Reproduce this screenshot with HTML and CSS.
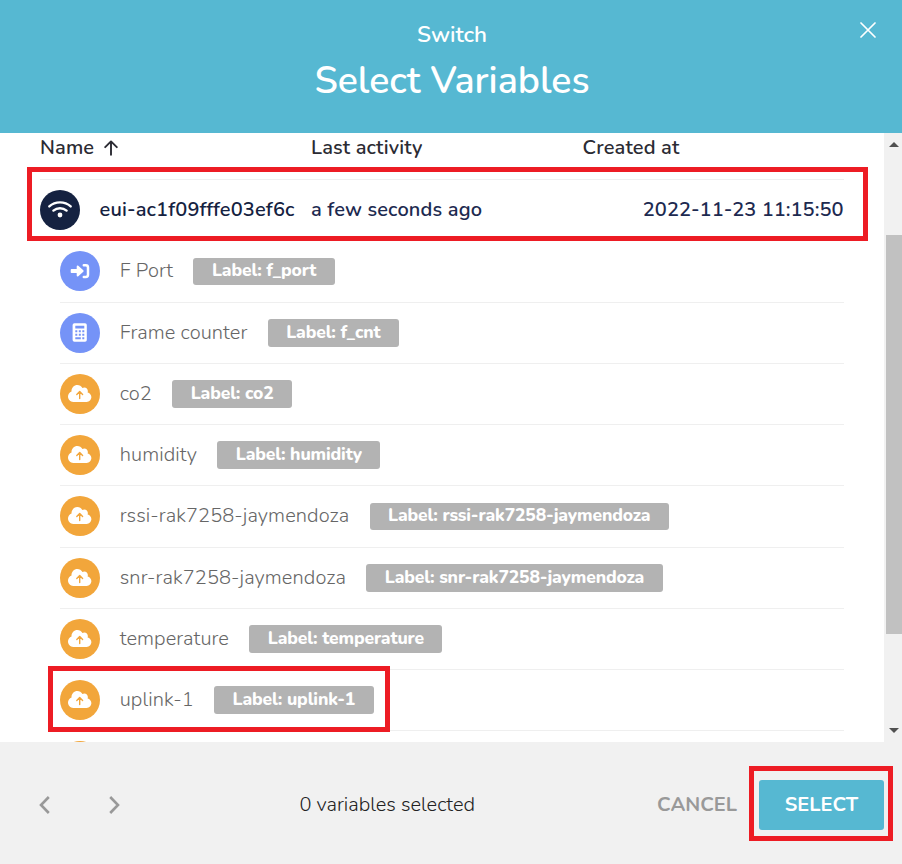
FILE: index.html
```
<!DOCTYPE html>
<html lang="en">
<head>
<meta charset="utf-8">
<title>Select Variables</title>
<link rel="stylesheet" href="styles.css">
</head>
<body>
<svg class="defs" aria-hidden="true">
  <symbol id="cloud" viewBox="0 0 40 40">
    <path transform="translate(8 9.9) scale(.0365 .0375)" fill="#fff" d="M537.6 226.6c4.1-10.7 6.4-22.4 6.4-34.6 0-53-43-96-96-96-19.7 0-38.1 6-53.3 16.2C367 64.2 315.3 32 256 32c-88.4 0-160 71.6-160 160 0 2.7.1 5.4.2 8.1C40.2 219.8 0 273.2 0 336c0 79.5 64.5 144 144 144h368c70.7 0 128-57.3 128-128 0-61.9-44-113.6-102.4-125.4z"/>
    <path d="M19.7 24.6V17.8M16.8 20.5l2.9-2.9 2.9 2.9" fill="none" stroke="#f2a63b" stroke-width="1.4" stroke-linecap="round" stroke-linejoin="round"/>
  </symbol>
</svg>
<div class="dialog">
  <header class="header">
    <div class="subtitle">Switch</div>
    <h1 class="title">Select Variables</h1>
    <button class="close" aria-label="Close"><svg width="16" height="16" viewBox="0 0 16 16"><path d="M1 1l14 14M15 1L1 15" stroke="#fff" stroke-width="1.7" stroke-linecap="round"/></svg></button>
  </header>
  <main class="body">
    <div class="list">
      <div class="columns">
        <div class="col-name">Name <svg class="sort" width="14" height="16" viewBox="0 0 14 16"><path d="M7 14.8V1.6M1.2 7.2L7 1.4l5.8 5.8" fill="none" stroke="#2b2b33" stroke-width="1.9" stroke-linecap="round" stroke-linejoin="round"/></svg></div>
        <div>Last activity</div>
        <div>Created at</div>
      </div>
      <div class="device">
        <div class="device-name"><span class="dot navy"><svg viewBox="0 0 40 40"><path d="M9.3 16.4c6-5.4 15.4-5.4 21.4 0M13.4 20.6c3.8-3.2 9.4-3.2 13.2 0" fill="none" stroke="#fff" stroke-width="2.4" stroke-linecap="round"/><circle cx="20" cy="25" r="2.4" fill="#fff"/></svg></span><span>eui-ac1f09fffe03ef6c</span></div>
        <div>a few seconds ago</div>
        <div class="date">2022-11-23 11:15:50</div>
      </div>
      <div class="rows">
        <div class="row tall first"><span class="dot blue"><svg viewBox="0 0 40 40"><path d="M11.5 18.1h5.2v-2.6c0-1 .9-1.3 1.6-.7l5 4.5c.5.5.5 1 0 1.5l-5 4.5c-.7.6-1.6.3-1.6-.7V22h-5.2c-.5 0-.8-.3-.8-.8v-2.3c0-.5.3-.8.8-.8z" fill="#fff"/><path d="M23.8 14.2h2a2.2 2.2 0 0 1 2.2 2.2v7.4a2.2 2.2 0 0 1-2.2 2.2h-2" fill="none" stroke="#fff" stroke-width="2.5" stroke-linecap="round"/></svg></span><span class="name">F Port</span><span class="badge">Label: f_port</span></div>
        <div class="row"><span class="dot blue"><svg viewBox="0 0 40 40"><rect x="12.6" y="10.3" width="14.2" height="18.5" rx="1.8" fill="#fff"/><path d="M15.3 12.8h9v2.8h-9zM15.3 17.3h2v2h-2zM18.8 17.3h2v2h-2zM22.3 17.3h2v2h-2zM15.3 20.8h2v2h-2zM18.8 20.8h2v2h-2zM22.3 20.8h2v2h-2zM15.3 24.3h5.5v2h-5.5zM22.3 24.3h2v2h-2z" fill="#7593f7"/></svg></span><span class="name">Frame counter</span><span class="badge">Label: f_cnt</span></div>
        <div class="row"><span class="dot orange"><svg><use href="#cloud"/></svg></span><span class="name">co2</span><span class="badge">Label: co2</span></div>
        <div class="row"><span class="dot orange"><svg><use href="#cloud"/></svg></span><span class="name">humidity</span><span class="badge">Label: humidity</span></div>
        <div class="row tall"><span class="dot orange"><svg><use href="#cloud"/></svg></span><span class="name">rssi-rak7258-jaymendoza</span><span class="badge">Label: rssi-rak7258-jaymendoza</span></div>
        <div class="row"><span class="dot orange"><svg><use href="#cloud"/></svg></span><span class="name">snr-rak7258-jaymendoza</span><span class="badge">Label: snr-rak7258-jaymendoza</span></div>
        <div class="row"><span class="dot orange"><svg><use href="#cloud"/></svg></span><span class="name">temperature</span><span class="badge">Label: temperature</span></div>
        <div class="row"><span class="dot orange"><svg><use href="#cloud"/></svg></span><span class="name">uplink-1</span><span class="badge">Label: uplink-1</span></div>
        <div class="row"><span class="dot orange"></span></div>
      </div>
    </div>
    <div class="scrollbar"><span class="arrow up"></span><span class="thumb"></span><span class="arrow down"></span></div>
  </main>
  <footer class="footer">
    <div class="pager">
      <svg width="12" height="18" viewBox="0 0 12 18"><path d="M9.8 1L2 9l7.8 8"/></svg>
      <svg width="12" height="18" viewBox="0 0 12 18"><path d="M2.2 1L10 9l-7.8 8"/></svg>
    </div>
    <div class="count">0 variables selected</div>
    <div class="actions"><button class="cancel">CANCEL</button><button class="select">SELECT</button></div>
  </footer>
  <div class="mark mark-device"></div>
  <div class="mark mark-variable"></div>
  <div class="mark mark-select"></div>
</div>
</body>
</html>
```
FILE: styles.css
```
* { box-sizing: border-box; }
body { margin: 0; font: 400 20px/28px Nunito, "Nunito Sans", Lato, sans-serif; }
button { font: inherit; border: 0; background: none; padding: 0; }
.defs { position: absolute; width: 0; height: 0; }
.dialog { position: relative; width: 902px; height: 864px; display: flex; flex-direction: column; overflow: hidden; background: #fff; }

.header { height: 133px; background: #56b8d2; color: #fff; text-align: center; padding-top: 19px; }
.subtitle { font-size: 22.5px; line-height: 32px; font-weight: 600; padding-left: 2px; }
.title { margin: 5px 0 0; font-size: 37.5px; line-height: 50px; font-weight: 600; padding-left: 2px; }
.close { position: absolute; right: 26px; top: 22px; width: 16px; height: 16px; }
.close svg { display: block; }

.body { height: 609px; display: flex; overflow: hidden; }
.list { width: 884px; padding: 0 40px; }
.columns, .device { display: grid; grid-template-columns: 271px 271.5px 1fr; font-weight: 650; letter-spacing: .15px; white-space: nowrap; }
.columns { height: 46px; padding-top: 1px; color: #2b2b33; }
.col-name { display: flex; align-items: center; gap: 9.5px; height: 28px; }
.device { height: 61px; border-top: 1px solid #efefef; color: #1d2a50; line-height: 59px; }
.device-name { display: flex; gap: 19.5px; color: #152241; }
.device-name .dot { margin-top: 10px; }
.date { text-align: right; letter-spacing: .04px; padding-right: .5px; }

.dot { flex: none; width: 40px; height: 40px; border-radius: 50%; }
.dot svg { display: block; width: 40px; height: 40px; }
.navy { background: #152241; }
.blue { background: #7593f7; }
.orange { background: #f2a63b; }

.rows { padding-left: 20px; }
.row { height: 61px; border-top: 1px solid #efefef; display: flex; align-items: flex-start; padding-top: 10px; }
.tall { height: 62px; }
.first { border-top-color: transparent; }
.name { margin: 6px 20.3px 0 19.7px; color: #666; font-weight: 360; letter-spacing: .09px; }
.badge { height: 28px; margin-top: 6px; padding: 0 18.5px; border-radius: 3px; background: #b3b3b3; color: #fff; font-size: 17.5px; line-height: 26px; font-weight: 800; letter-spacing: -.14px; }
.tall .badge { margin-top: 7px; height: 27px; line-height: 25px; }

.scrollbar { width: 18px; background: #f1f1f1; display: flex; flex-direction: column; align-items: center; padding: 9px 0 9px 2px; }
.arrow { border: 5px solid transparent; }
.up { border-top: 0; border-bottom-color: #505050; }
.down { margin-top: auto; border-bottom: 0; border-top-color: #505050; }
.thumb { width: 16px; height: 399px; margin-top: 88px; background: #c1c1c1; }

.footer { height: 122px; background: #f1f1f1; display: grid; grid-template-columns: 260.5px 1fr auto; align-items: center; padding: 4px 18px 0 39px; }
.pager { display: flex; gap: 57px; margin-top: -1px; }
.pager path { fill: none; stroke: #999; stroke-width: 2.6; }
.count { font-weight: 300; color: #222; }
.actions { display: flex; justify-content: flex-end; gap: 22px; font-weight: 700; }
.cancel { color: #999; }
.select { width: 125px; height: 50px; border-radius: 3px; background: #56b8d2; color: #fff; }

.mark { position: absolute; border: 5px solid #ed1c24; }
.mark-device { left: 27px; top: 167px; width: 841px; height: 74px; }
.mark-variable { left: 48px; top: 666px; width: 342px; height: 66px; }
.mark-select { left: 749px; top: 766px; width: 144px; height: 75px; }
```
